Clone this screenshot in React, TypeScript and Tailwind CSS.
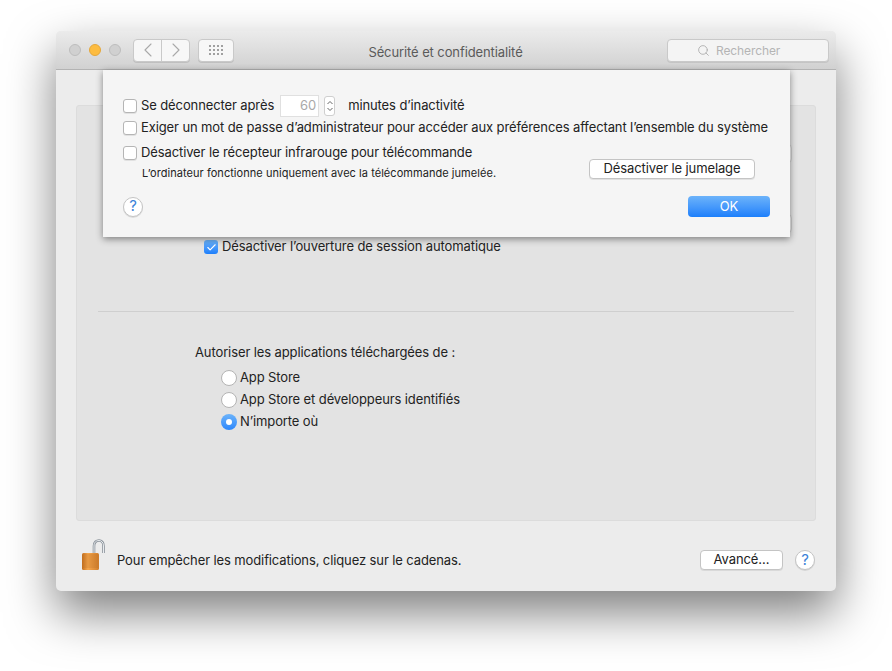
import { Check, ChevronLeft, ChevronRight, Search } from 'lucide-react';

const font = 'font-["Inter","Liberation_Sans",sans-serif]';

function Checkbox({ checked }: { checked?: boolean }) {
  if (checked) {
    return (
      <span className="flex h-[14px] w-[14px] shrink-0 items-center justify-center rounded-[3px] bg-gradient-to-b from-[#6cb3fa] to-[#1c7ffb]">
        <Check className="h-[11px] w-[11px] text-white" strokeWidth={2.5} />
      </span>
    );
  }
  return (
    <span className="h-[14px] w-[14px] shrink-0 rounded-[3px] border border-[#b5b5b5] bg-white shadow-[0_1px_0_rgba(0,0,0,0.08)]" />
  );
}

function Radio({ checked, label }: { checked?: boolean; label: string }) {
  return (
    <div className="flex h-[22px] items-center gap-[3px]">
      {checked ? (
        <span className="flex h-[16px] w-[16px] shrink-0 items-center justify-center rounded-full bg-gradient-to-b from-[#6cb3fa] to-[#2a86fb]">
          <span className="h-[6px] w-[6px] rounded-full bg-white" />
        </span>
      ) : (
        <span className="h-[16px] w-[16px] shrink-0 rounded-full border border-[#b4b4b4] bg-white" />
      )}
      <span>{label}</span>
    </div>
  );
}

function HelpButton() {
  return (
    <span className="flex h-[20px] w-[20px] shrink-0 items-center justify-center rounded-full border border-[#c4c4c4] bg-white text-[15px] text-[#3b82d8] shadow-[0_1px_0_rgba(0,0,0,0.1)]">
      ?
    </span>
  );
}

function PushButton({ label, className }: { label: string; className: string }) {
  return (
    <span className={`flex h-[20px] items-center justify-center rounded-[4px] border border-[#c4c4c4] bg-white text-[#222] shadow-[0_1px_0_rgba(0,0,0,0.08)] ${className}`}>
      {label}
    </span>
  );
}

function LockIcon() {
  return (
    <svg width="26" height="32" viewBox="0 0 26 32" className="shrink-0">
      <defs>
        <linearGradient id="shackle" x1="0" y1="0" x2="1" y2="0">
          <stop offset="0" stopColor="#7f8890" />
          <stop offset="0.5" stopColor="#e6e9ec" />
          <stop offset="1" stopColor="#7f8890" />
        </linearGradient>
        <linearGradient id="body" x1="0" y1="0" x2="1" y2="0">
          <stop offset="0" stopColor="#c4701f" />
          <stop offset="0.35" stopColor="#f5a64c" />
          <stop offset="1" stopColor="#d17f2c" />
        </linearGradient>
      </defs>
      <path d="M14 14 V7 C14 3 16.5 1.5 19 1.5 C21.5 1.5 23.5 3.5 23.5 7 V14" fill="none" stroke="#8a929a" strokeWidth="2.6" />
      <path d="M14 14 V7 C14 3 16.5 1.5 19 1.5 C21.5 1.5 23.5 3.5 23.5 7 V14" fill="none" stroke="#e9ecef" strokeWidth="1" />
      <rect x="2" y="14" width="17" height="17" rx="1.5" fill="url(#body)" />
      {[16, 18, 20, 22, 24, 26, 28].map((y) => (
        <line key={y} x1="2.5" x2="18.5" y1={y} y2={y} stroke="#a85f1c" strokeOpacity="0.45" strokeWidth="0.8" />
      ))}
    </svg>
  );
}

function TitleBar() {
  return (
    <div className="relative flex h-[39px] shrink-0 items-center rounded-t-[5px] border-b border-[#b3b3b3] bg-gradient-to-b from-[#ebebeb] to-[#d1d1d1] pl-[13px] pr-[7px]">
      <div className="flex gap-[8px]">
        <span className="h-[12px] w-[12px] rounded-full border border-[#bdbdbd] bg-[#d0d0d0]" />
        <span className="h-[12px] w-[12px] rounded-full border border-[#e5a73a] bg-[#fdbc40]" />
        <span className="h-[12px] w-[12px] rounded-full border border-[#bdbdbd] bg-[#d0d0d0]" />
      </div>
      <div className="ml-[12px] flex h-[23px] w-[57px] rounded-[4px] border border-[#c9c9c9] bg-[#f7f7f7] shadow-[0_1px_0_rgba(0,0,0,0.1)]">
        <span className="flex flex-1 items-center justify-center border-r border-[#c9c9c9]">
          <ChevronLeft className="h-[24px] w-[24px] text-[#a9a9a9]" strokeWidth={1.1} />
        </span>
        <span className="flex flex-1 items-center justify-center">
          <ChevronRight className="h-[24px] w-[24px] text-[#a9a9a9]" strokeWidth={1.1} />
        </span>
      </div>
      <div className="ml-[8px] grid h-[23px] w-[36px] grid-cols-[repeat(4,2px)] content-center justify-center gap-[2px] rounded-[4px] border border-[#c9c9c9] bg-[#f7f7f7] shadow-[0_1px_0_rgba(0,0,0,0.1)]">
        {Array.from({ length: 12 }).map((_, i) => (
          <span key={i} className="h-[2px] w-[2px] bg-[#a0a0a0]" />
        ))}
      </div>
      <span className="flex-1 pr-[10px] pt-[5px] text-center text-[13px] tracking-[-0.1px] text-[#5a5a5a]">Sécurité et confidentialité</span>
      <div className="flex h-[23px] w-[162px] items-center gap-[6px] rounded-[4px] border border-[#c9c9c9] bg-[#f4f4f4] pl-[29px] pt-[1px] text-[12px] text-[#b4b4b4] shadow-[0_1px_0_rgba(0,0,0,0.08)]">
        <Search className="h-[13px] w-[13px] text-[#a8a8a8]" strokeWidth={1.5} />
        Rechercher
      </div>
    </div>
  );
}

function Sheet() {
  return (
    <div className="absolute left-[47px] top-[39px] h-[167px] w-[687px] bg-[#f5f5f5] pl-[20px] pr-[20px] pt-[25px] shadow-[0_2px_7px_rgba(0,0,0,0.45)]">
      <div className="flex h-[22px] items-center">
        <Checkbox />
        <span className="ml-[4px]">Se déconnecter après</span>
        <span className="ml-[6px] flex h-[22px] w-[39px] items-center justify-end border border-[#e0e0e0] bg-white pr-[2px] text-[#a9a9a9]">60</span>
        <span className="ml-[5px] flex h-[20px] w-[11px] flex-col items-center justify-center rounded-[3px] border border-[#cfcfcf] bg-white text-[#666]">
          <svg width="8" height="14" viewBox="0 0 8 14" fill="none" stroke="#666" strokeWidth="1">
            <path d="M1.5 5 L4 2.5 L6.5 5" />
            <path d="M1.5 9 L4 11.5 L6.5 9" />
          </svg>
        </span>
        <span className="ml-[13px]">minutes d’inactivité</span>
      </div>
      <div className="flex h-[22px] items-center gap-[4px]">
        <Checkbox />
        <span className="whitespace-nowrap">Exiger un mot de passe d’administrateur pour accéder aux préférences affectant l’ensemble du système</span>
      </div>
      <div className="mt-[3px] flex h-[38px] items-start justify-between pr-[15px]">
        <div>
          <div className="flex h-[22px] items-center gap-[4px]">
            <Checkbox />
            <span>Désactiver le récepteur infrarouge pour télécommande</span>
          </div>
          <div className="pl-[19px] pt-[1px] text-[11px] leading-[16px] tracking-[0.05px]">L’ordinateur fonctionne uniquement avec la télécommande jumelée.</div>
        </div>
        <PushButton label="Désactiver le jumelage" className="mt-[17px] w-[166px]" />
      </div>
      <div className="mt-[16px] flex items-center justify-between">
        <HelpButton />
        <span className="flex h-[21px] w-[82px] items-center justify-center rounded-[4px] bg-gradient-to-b from-[#6cb3fa] to-[#1b7ffb] text-white">OK</span>
      </div>
    </div>
  );
}

export default function App() {
  return (
    <div className={`h-[671px] w-[892px] overflow-hidden bg-white pl-[56px] pt-[31px] text-[13px] tracking-[-0.11px] text-[#222] ${font}`}>
      <div className="relative flex h-[560px] w-[780px] flex-col rounded-[5px] bg-[#ececec] shadow-[0_22px_48px_rgba(0,0,0,0.5)]">
        <TitleBar />
        <div className="flex-1 px-[20px] pt-[35px]">
          <div className="relative h-[416px] rounded-[3px] border border-[#dcdcdc] bg-[#e3e3e3] pl-[21px] pr-[21px]">
            <span className="absolute right-[23px] top-[38px] h-[19px] w-[10px] rounded-r-[4px] border border-[#cdcdcd] bg-[#f4f4f4]" />
            <span className="absolute right-[23px] top-[108px] h-[19px] w-[10px] rounded-r-[4px] border border-[#cdcdcd] bg-[#f4f4f4]" />
            <div className="mt-[130px] flex h-[22px] items-center gap-[4px] pl-[106px]">
              <Checkbox checked />
              <span>Désactiver l’ouverture de session automatique</span>
            </div>
            <div className="mt-[53px] border-t border-[#cfcfcf]" />
            <div className="mt-[31px] pl-[97px]">Autoriser les applications téléchargées de :</div>
            <div className="mt-[4px] pl-[123px]">
              <Radio label="App Store" />
              <Radio label="App Store et développeurs identifiés" />
              <Radio label="N’importe où" checked />
            </div>
          </div>
          <div className="flex h-[50px] items-end pl-[4px] pr-[1px] pt-[18px]">
            <LockIcon />
            <span className="mb-[1px] ml-[11px] flex-1 leading-[20px]">Pour empêcher les modifications, cliquez sur le cadenas.</span>
            <PushButton label="Avancé…" className="mb-[1px] w-[83px]" />
            <span className="mb-[1px] ml-[12px]">
              <HelpButton />
            </span>
          </div>
        </div>
        <Sheet />
      </div>
    </div>
  );
}
